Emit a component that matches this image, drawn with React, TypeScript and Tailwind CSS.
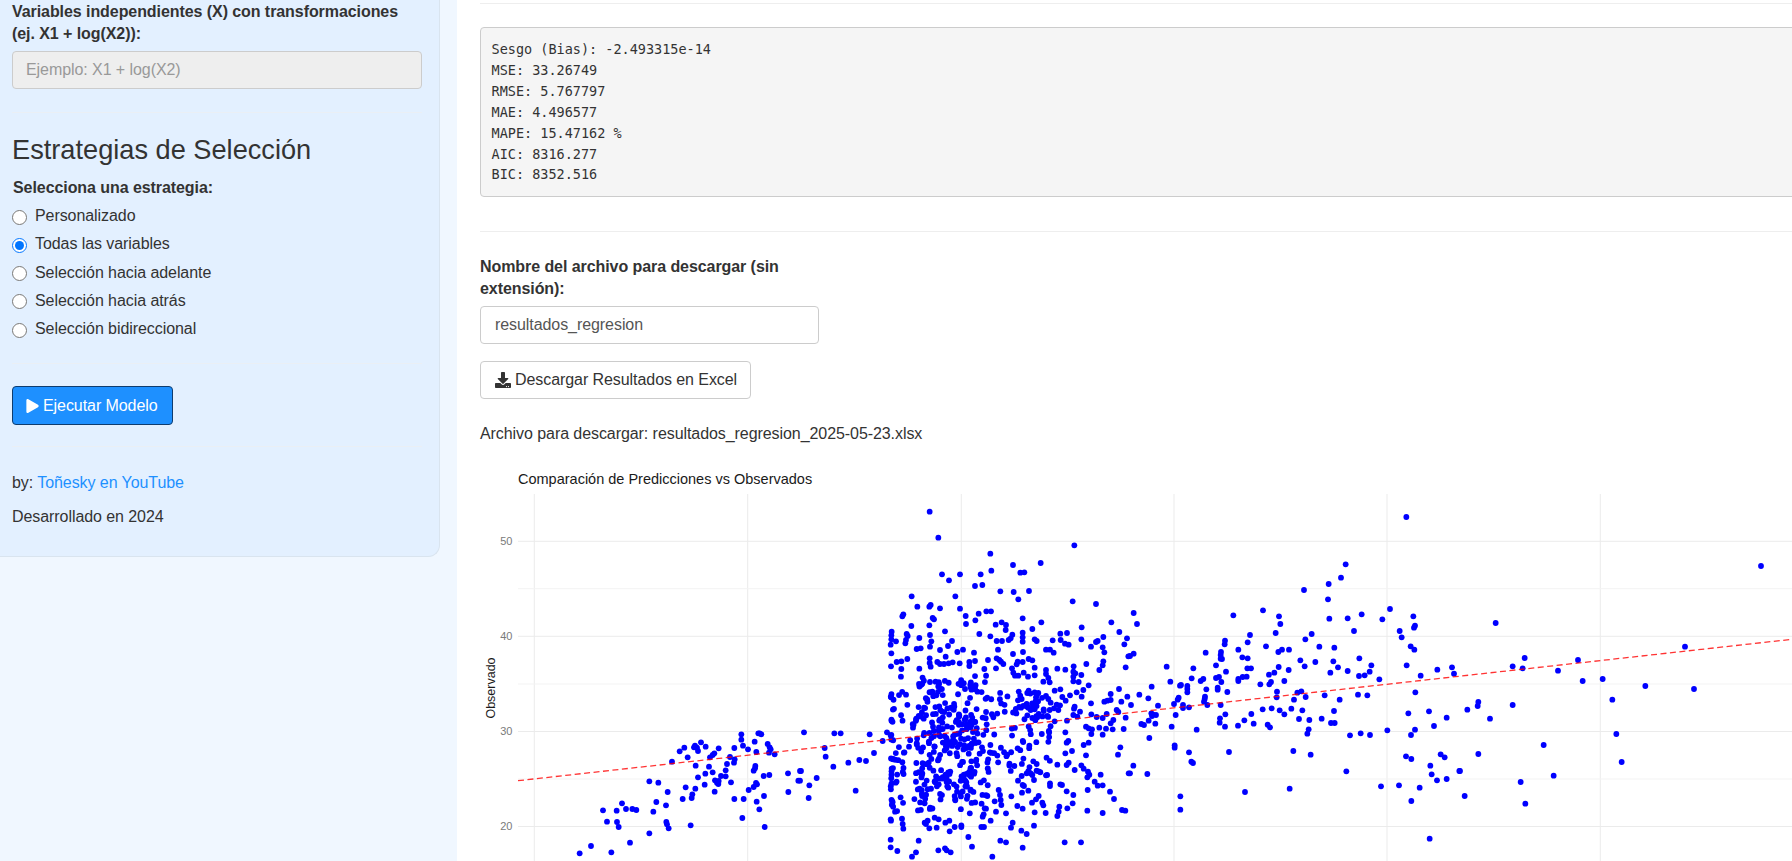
import { FaDownload, FaPlay } from "react-icons/fa";

type P = [number, number];
const toPts = (ox: number, raw: number[]): P[] => {
  const out: P[] = [];
  for (let i = 0; i < raw.length; i += 2) out.push([ox + raw[i] / 3, 480 + raw[i + 1] / 3]);
  return out;
};

const c1 = [329,1120,363,1098,424,1117,480,1088,538,1060,596,1045,591,1033,589,1026,662,1036,446,1041,441,1026,411,1025,399,991,440,992,456,970,468,987,487,987,499,990,550,995,559,966,588,976,538,904,565,908,593,936,638,957,665,954,667,943,676,926,647,922,684,892,677,857,606,845,629,814,643,803,653,832,672,802,675,797,681,803,684,813,693,787,707,800,746,805,733,820,728,825,720,832,717,860,706,881,728,877,704,914,735,901,741,908,746,903,745,912,734,935,753,888,767,889,767,871,771,852,780,831,793,804,794,838,792,848,814,763,814,779,819,797,834,808,783,907,793,957,821,957,817,1014,854,785,865,760,869,760,874,763,859,816,893,792,899,802,902,808,897,818,914,823,856,858,855,865,851,872,881,888,898,885,858,909,861,913,851,921,836,930,882,948,860,965,868,988,884,1041,954,880,955,936,990,873,985,902];

const c2 = [389,95,415,173,571,221,823,196,722,249,639,255,574,272,661,278,673,277,426,283,447,301,480,283,542,283,525,318,547,315,601,334,641,336,687,333,655,358,335,349,466,349,352,380,388,380,392,375,420,385,480,386,818,364,888,372,310,403,307,409,559,394,573,394,536,401,497,408,398,414,402,418,526,421,668,415,498,432,388,436,334,438,587,434,605,427,618,435,724,427,697,447,617,450,845,442,934,427,958,456,435,454,275,455,274,466,274,478,272,494,288,484,320,462,323,468,318,480,316,490,358,474,390,465,394,484,390,500,350,507,362,505,538,462,571,469,637,464,632,475,626,480,590,483,606,483,668,458,668,472,668,485,704,478,710,483,758,481,781,461,801,459,782,480,795,491,806,494,844,478,873,500,888,486,893,483,910,471,908,502,913,517,973,493,981,475,985,529,274,520,273,559,290,546,304,544,322,537,304,567,358,566,456,483,444,498,420,510,437,530,472,516,489,509,522,518,594,509,639,522,669,516,738,509,750,509,761,518,389,535,389,549,392,560,412,546,420,552,432,552,446,550,458,547,479,550,508,546,508,558,525,543,564,540,590,535,598,540,603,545,610,552,588,565,553,567,653,545,650,553,668,546,686,537,697,541,704,563,636,565,640,578,645,587,655,587,671,578,684,590,704,586,738,570,738,582,745,594,730,605,749,607,772,566,796,569,821,559,820,575,826,580,844,585,820,590,820,604,836,606,859,552,866,616,898,570,908,556,910,544,977,562,850,630,830,637,845,650,810,646,764,632,781,628,787,651,797,662,770,674,780,676,775,690,762,685,749,690,731,688,704,637,686,632,738,648,745,657,752,668,708,652,708,670,665,657,654,661,680,672,692,690,704,688,716,702,712,712,697,714,824,680,822,686,840,695,820,705,832,710,801,722,742,708,764,724,873,670,874,703,890,711,913,665,922,662,932,642,932,660,957,627,964,665,982,650,950,690,955,696,977,713,908,714,920,702,940,720,932,730,918,746,898,743,908,764,938,748,971,747,858,740,866,745,876,748,874,762,866,788,851,795,961,802,954,824,858,826,816,813,796,757,800,788,805,783,796,820,772,854,800,855,806,848,824,870,844,856,851,866,864,875,868,884,862,892,902,884,986,880,884,905,893,917,908,916,863,930,930,935,942,957,820,945,800,934,781,913,786,915,750,910,750,918,716,874,710,852,738,886,702,900,686,875,680,880,692,880,697,885,665,888,654,902,668,915,672,918,666,938,685,932,716,948,708,958,696,968,727,968,730,976,818,970,802,985,778,980,776,995,772,1008,737,999,704,997,668,986,652,978,634,949,600,945,596,930,602,960,604,975,584,964,562,948,554,985,558,986,551,1003,548,1010,588,995,618,1000,572,1022,638,1028,633,1043,664,1052,680,1062,702,1037,862,992,908,999,966,990,976,992,272,1018,273,1022,306,1016,308,1032,310,1046,272,1079,272,1102,292,1113,348,1117,336,1130,356,1082,415,1111,435,1105,440,1111,452,1117,505,1071,516,1100,577,1130,601,1082,618,1087,668,1103,794,1087,843,1087,544,1041,552,1041,484,1036,484,1041,464,1041,449,1054,436,1028,448,1022,416,1018,404,1013,410,1043,388,1045,383,1022,374,1028,378,1032,12,757,103,760,122,760,209,763,261,757,274,765,248,783,74,804,77,830,100,860,145,848,178,840,198,843,222,819,3,873,0,902,50,894,28,916,26,954,167,932];

const c3 = [11,399,21,432,11,521,0,528,110,560,121,605,65,620,28,644,55,655,3,675,84,677,132,672,143,659,146,653,137,705,125,740,200,749,64,700,68,703,78,705,66,708,56,722,34,732,42,735,76,731,58,774,134,796,134,803,177,817,184,845,189,849,297,816,10,857,0,880,52,882,151,949,151,989,345,936,479,926,649,874,753,919,807,916,869,923,844,963,899,1076,829,111,647,253,633,293,596,312,522,330,594,358,399,391,780,387,310,406,447,409,598,416,653,415,695,403,757,418,850,409,451,432,855,437,852,443,672,453,809,453,437,459,360,465,545,462,815,472,526,478,285,482,284,493,353,487,408,499,568,500,613,503,842,499,853,509,227,518,273,516,272,525,272,536,276,537,325,509,445,516,456,509,477,509,337,532,353,535,511,541,556,546,610,544,688,535,258,556,190,565,352,565,363,565,446,561,476,570,524,559,624,562,724,556,830,556,966,562,922,569,653,573,719,575,601,578,288,575,185,595,212,603,220,597,258,594,267,591,274,606,325,597,325,603,338,591,350,590,417,584,433,578,463,603,687,588,704,586,748,598,872,587,972,581,391,613,418,613,423,606,150,617,153,615,172,618,172,627,172,637,229,628,263,623,263,629,292,636,441,635,502,638,514,634,856,637,584,646,684,644,712,646,225,650,224,657,222,665,232,675,272,675,440,652,527,651,492,659,629,659,159,675,159,684,177,682,398,688,425,685,449,691,484,686,517,691,612,693,286,703,364,702,463,703,835,700,897,694,950,713,270,715,269,728,285,740,343,721,371,731,324,737,413,734,420,742,507,717,538,720,575,716,603,729,614,729,912,738,536,748,532,761,660,766,692,760,720,765,772,751,855,749,843,765,490,813,542,824,828,829,844,837,932,823,944,832,901,857,905,883,921,901,950,897,988,873];

const c4 = [903,258,107,429,194,534,158,559,188,565,354,540,294,572,675,500,368,603,428,597,556,618,702,627,457,659,55,666,53,678,22,689,158,675,90,716,469,762,251,795,55,822,485,846,0,873,281,887,182,906,14,948,196,971];

// Dense core of the cloud, spread evenly by a fixed seed.
function dense(): P[] {
  let s = 20250523;
  const r = () => {
    s = (s + 0x6d2b79f5) | 0;
    let t = Math.imul(s ^ (s >>> 15), 1 | s);
    t = (t + Math.imul(t ^ (t >>> 7), 61 | t)) ^ t;
    return ((t ^ (t >>> 14)) >>> 0) / 4294967296;
  };
  const raw: number[] = [];
  for (let i = 0; i < 170; i++) raw.push(345 + r() * 190, 600 + r() * 370);
  for (let i = 0; i < 150; i++) raw.push(284 + r() * 280, 585 + r() * 420);
  for (let i = 0; i < 28; i++) raw.push(272 + r() * 10, 620 + r() * 380);
  for (let i = 0; i < 90; i++) raw.push(555 + r() * 200, 625 + r() * 260);
  return toPts(800, raw);
}

const points: P[] = [...toPts(470, c1), ...toPts(800, c2), ...dense(), ...toPts(1130, c3), ...toPts(1460, c4)];

const yTicks: [number, string][] = [[541.3, "50"], [636.3, "40"], [731.5, "30"], [826.5, "20"]];
const yMinor = [588.7, 684, 779];
const xGrid = [534.3, 747.7, 961.3, 1174, 1387, 1600.3];
const Y0 = 462;

function Chart() {
  return (
    <svg width="1312" height="399" viewBox={`480 ${Y0} 1312 399`} className="mt-[17px] block tracking-normal" style={{ fontFamily: "'Liberation Sans', Arial, sans-serif" }}>
      <text x="518" y="483.5" fontSize="14.5" fill="#1a1a1a">Comparación de Predicciones vs Observados</text>
      {xGrid.map((x) => <line key={x} x1={x} x2={x} y1="494" y2="861" stroke="#ebebeb" strokeWidth="1" />)}
      {yMinor.map((y) => <line key={y} x1="518" x2="1792" y1={y} y2={y} stroke="#f3f3f3" strokeWidth="1" />)}
      {yTicks.map(([y]) => <line key={y} x1="518" x2="1792" y1={y} y2={y} stroke="#ebebeb" strokeWidth="1" />)}
      {yTicks.map(([y, t]) => <text key={t} x="512.5" y={y + 3.8} fontSize="11" textAnchor="end" fill="#7a7a7a">{t}</text>)}
      <text transform="translate(495,688) rotate(-90)" fontSize="12.5" textAnchor="middle" fill="#1a1a1a">Observado</text>
      {points.map(([x, y], i) => <circle key={i} cx={x} cy={y} r="2.9" fill="#0000ff" />)}
      <line x1="518" y1="780.7" x2="1792" y2="639.3" stroke="#ff0000" strokeOpacity="0.8" strokeWidth="1.3" strokeDasharray="6 3.5" />
    </svg>
  );
}

const strategies = ["Personalizado", "Todas las variables", "Selección hacia adelante", "Selección hacia atrás", "Selección bidireccional"];
const metrics = ["Sesgo (Bias): -2.493315e-14", "MSE: 33.26749", "RMSE: 5.767797", "MAE: 4.496577", "MAPE: 15.47162 %", "AIC: 8316.277", "BIC: 8352.516"];

export default function App() {
  return (
    <div className="flex h-[861px] w-[1792px] overflow-hidden bg-white text-[16px] leading-[22px] tracking-[-0.07px] text-[#333333] font-['Liberation_Sans',Arial,sans-serif]">
      <div className="w-[457px] shrink-0 bg-[#f0f7ff]">
        <aside className="h-[557px] w-[440px] rounded-br-[12px] border-r border-b border-[#d9e4ef] bg-[#e3f0ff] pt-px pl-3 pr-[18px]">
          <label className="block font-bold">Variables independientes (X) con transformaciones (ej. X1 + log(X2)):</label>
          <input disabled placeholder="Ejemplo: X1 + log(X2)" className="mt-[6px] block h-[38px] w-[410px] rounded border border-[#cccccc] bg-[#eeeeee] px-[13px] text-[16px] placeholder:text-[#999999]" />
          <div className="mt-[23px] h-px w-[410px] bg-[#eaeff5]" />
          <h3 className="mt-[20px] text-[27.2px] leading-[34px] font-normal tracking-normal">Estrategias de Selección</h3>
          <div className="mt-[10px] pl-px font-bold">Selecciona una estrategia:</div>
          <div className="mt-[4px] flex flex-col">
            {strategies.map((s, i) => (
              <label key={s} className="flex h-[28.25px] items-center gap-[8px]">
                <input type="radio" name="strategy" defaultChecked={i === 1} className="m-0 h-[15px] w-[15px] accent-[#0075ff]" />
                <span className="-mt-[2px]">{s}</span>
              </label>
            ))}
          </div>
          <div className="mt-[19px] h-px w-[410px] bg-[#eaeff5]" />
          <button className="mt-[22px] flex h-[39px] items-center gap-[4px] rounded border border-[#0f3c6e] bg-[#1e90ff] pl-[13px] pr-[14px] text-white">
            <FaPlay className="h-[14px] w-[13px]" />
            Ejecutar Modelo
          </button>
          <div className="mt-[21px] h-px w-[410px] bg-[#eaeff5]" />
          <p className="mt-[25px]">by: <a className="text-[#1e90ff]">Toñesky en YouTube</a></p>
          <p className="mt-[12px]">Desarrollado en 2024</p>
        </aside>
      </div>
      <main className="min-w-0 flex-1 overflow-hidden pl-[23px]">
        <div className="mt-[3px] h-px w-full bg-[#eeeeee]" />
        <pre className="mt-[23px] mr-[-20px] h-[170px] rounded border border-[#cccccc] bg-[#f5f5f5] px-[10.5px] pt-[11px] font-['DejaVu_Sans_Mono',monospace] text-[13.5px] leading-[20.9px] tracking-normal text-[#333333]">{metrics.join("\n")}</pre>
        <div className="mt-[34px] h-px w-full bg-[#eeeeee]" />
        <label className="mt-[24px] block w-[339px] font-bold">Nombre del archivo para descargar (sin extensión):</label>
        <input readOnly value="resultados_regresion" className="mt-[6px] block h-[38px] w-[339px] rounded border border-[#cccccc] bg-white px-[14px] text-[16px] text-[#555555]" />
        <button className="mt-[17px] flex h-[38px] w-[271px] items-center gap-[4px] rounded border border-[#cccccc] bg-white pl-[14px] text-[#333333]">
          <FaDownload className="h-[16px] w-[16px]" />
          Descargar Resultados en Excel
        </button>
        <p className="mt-[24px]">Archivo para descargar: resultados_regresion_2025-05-23.xlsx</p>
        <Chart />
      </main>
    </div>
  );
}
